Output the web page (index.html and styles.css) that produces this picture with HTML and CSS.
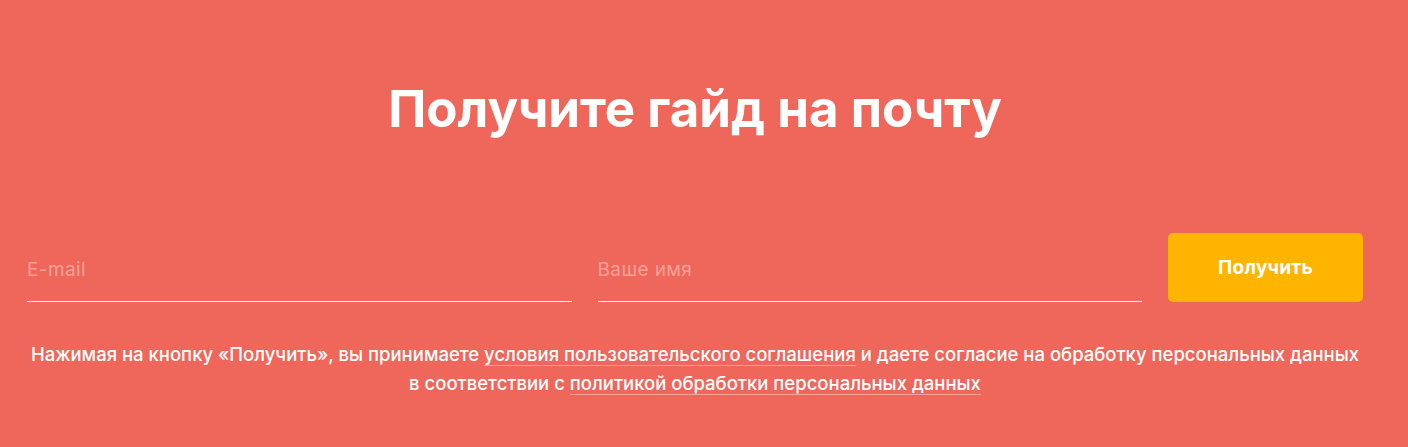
FILE: index.html
```html
<!DOCTYPE html>
<html lang="ru">
<head>
  <meta charset="UTF-8" />
  <title>Получите гайд на почту</title>
  <link rel="stylesheet" href="styles.css">
</head>
<body>
  <section class="guide">
    <div class="guide-inner">
      <h2 class="guide-title">Получите гайд на почту</h2>

      <form class="guide-form" onsubmit="return false">
        <input class="guide-input" type="email" placeholder="E-mail" />
        <input class="guide-input" type="text" placeholder="Ваше имя" />
        <button class="guide-btn" type="submit">Получить</button>
      </form>

      <p class="guide-note">
        Нажимая на кнопку «Получить», вы принимаете <a href="#">условия пользовательского соглашения</a> и даете согласие на обработку персональных данных<br>
        в соответствии с <a href="#">политикой обработки персональных данных</a>
      </p>
    </div>
  </section>
</body>
</html>
```

FILE: styles.css
```css
body {
  margin: 0;
  font-family: Inter, Roboto, "Liberation Sans", sans-serif;
  background: #ef665b;
}

.guide {
  background: #ef665b;
  height: 447px;
  box-sizing: border-box;
  padding-top: 76px;
}

.guide-inner {
  width: 1336px;
  margin-left: 27px;
}

.guide-title {
  margin: 0;
  text-align: center;
  color: #fff;
  font-size: 51px;
  line-height: 66px;
  font-weight: 700;
}

.guide-form {
  display: flex;
  gap: 26px;
  margin-top: 91px;
}

.guide-input {
  flex: 1;
  box-sizing: border-box;
  height: 69px;
  padding: 5px 0 0;
  border: 0;
  border-bottom: 1px solid #fff;
  background: transparent;
  color: #fff;
  font-family: inherit;
  font-size: 19px;
  letter-spacing: 0.4px;
  outline: none;
}

.guide-input::placeholder {
  color: rgba(255, 255, 255, 0.4);
}

.guide-btn {
  width: 195px;
  height: 69px;
  border: 0;
  border-radius: 5px;
  background: #ffb400;
  color: #fff;
  font-family: inherit;
  font-size: 19px;
  font-weight: 700;
  letter-spacing: 0.3px;
  cursor: pointer;
}

.guide-note {
  margin: 38px 0 0;
  text-align: center;
  color: #fff;
  font-size: 18.5px;
  font-weight: 500;
  line-height: 29px;
}

.guide-note a {
  color: #fff;
  text-decoration: none;
  border-bottom: 1px solid rgba(255, 255, 255, 0.4);
}
```
